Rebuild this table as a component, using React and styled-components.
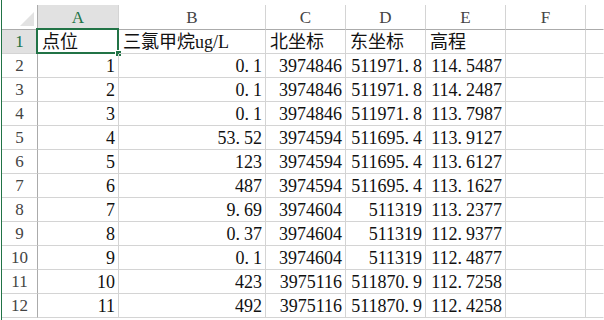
import React from 'react'
import styled, { createGlobalStyle } from 'styled-components'

const GlobalStyle = createGlobalStyle`
  html, body {
    margin: 0;
    padding: 0;
    background: #ffffff;
    overflow: hidden;
  }
`

const green = '#217346'
const grid = '#d4d4d4'
const headLine = '#ababab'

const Frame = styled.div`
  margin-left: 1px;
  border-left: 1px solid ${green};
  height: 320px;
  padding-top: 5px;
  box-sizing: border-box;
  font-family: "Liberation Serif", "Noto Sans CJK SC", serif;
  color: #111;
`

const Sheet = styled.div`
  display: grid;
  grid-template-columns: 36px 81px 147px 80px 80px 80px 80px 1fr;
  grid-template-rows: 25px;
  grid-auto-rows: 24px;
`

const Corner = styled.div`
  position: relative;
  box-sizing: border-box;
  border-right: 1px solid ${headLine};
  border-bottom: 1px solid ${headLine};

  &::after {
    content: '';
    position: absolute;
    right: 3px;
    bottom: 3px;
    width: 14px;
    height: 14px;
    background: #e2e2e2;
    clip-path: polygon(100% 0, 100% 100%, 0 100%);
  }
`

const ColHead = styled.div`
  box-sizing: border-box;
  display: flex;
  align-items: center;
  justify-content: center;
  font-size: 17px;
  padding-top: 1px;
  background: ${p => (p.$active ? '#e1e1e1' : '#ffffff')};
  color: ${p => (p.$active ? green : '#444')};
  border-right: 1px solid ${p => (p.$last ? 'transparent' : grid)};
  border-bottom: 1px solid ${headLine};
`

const RowHead = styled.div`
  box-sizing: border-box;
  display: flex;
  align-items: center;
  justify-content: center;
  font-size: 17px;
  padding-top: 1px;
  background: ${p => (p.$active ? '#e1e1e1' : '#ffffff')};
  color: ${p => (p.$active ? green : '#444')};
  border-right: 1px solid ${p => (p.$active ? green : headLine)};
  border-bottom: 1px solid ${grid};
`

const Cell = styled.div`
  position: relative;
  box-sizing: border-box;
  font-size: 18px;
  line-height: 23px;
  padding: 1px 3px 0 4px;
  white-space: nowrap;
  overflow: visible;
  text-align: ${p => (p.$num ? 'right' : 'left')};
  border-right: 1px solid ${p => (p.$last ? 'transparent' : grid)};
  border-bottom: 1px solid ${grid};
`

// SimSun-like half-width period: wider than the serif one
const Dot = styled.span`
  padding-right: 4px;
`

const Selected = styled(Cell)`
  &::before {
    content: '';
    position: absolute;
    top: -2px;
    left: -2px;
    right: -1px;
    bottom: -1px;
    border: 2px solid ${green};
    pointer-events: none;
  }

  &::after {
    content: '';
    position: absolute;
    right: -4px;
    bottom: -4px;
    width: 5px;
    height: 5px;
    background: ${green};
    border: 1px solid #ffffff;
  }
`

const columns = ['A', 'B', 'C', 'D', 'E', 'F', '']

const rows = [
  ['1', '0.1', '3974846', '511971.8', '114.5487'],
  ['2', '0.1', '3974846', '511971.8', '114.2487'],
  ['3', '0.1', '3974846', '511971.8', '113.7987'],
  ['4', '53.52', '3974594', '511695.4', '113.9127'],
  ['5', '123', '3974594', '511695.4', '113.6127'],
  ['6', '487', '3974594', '511695.4', '113.1627'],
  ['7', '9.69', '3974604', '511319', '113.2377'],
  ['8', '0.37', '3974604', '511319', '112.9377'],
  ['9', '0.1', '3974604', '511319', '112.4877'],
  ['10', '423', '3975116', '511870.9', '112.7258'],
  ['11', '492', '3975116', '511870.9', '112.4258'],
]

const Num = ({ value }) => {
  const [int, frac] = value.split('.')
  if (frac === undefined) return int
  return (
    <>
      {int}
      <Dot>.</Dot>
      {frac}
    </>
  )
}

const App = () => (
  <Frame>
    <GlobalStyle />
    <Sheet>
      <Corner />
      {columns.map((c, i) => (
        <ColHead key={i} $active={c === 'A'} $last={i === columns.length - 1}>
          {c}
        </ColHead>
      ))}

      <RowHead $active>1</RowHead>
      <Selected>点位</Selected>
      <Cell>三氯甲烷ug/L</Cell>
      <Cell>北坐标</Cell>
      <Cell>东坐标</Cell>
      <Cell>高程</Cell>
      <Cell />
      <Cell $last />

      {rows.map((r, i) => (
        <React.Fragment key={i}>
          <RowHead>{i + 2}</RowHead>
          {r.map((v, j) => (
            <Cell key={j} $num><Num value={v} /></Cell>
          ))}
          <Cell />
          <Cell $last />
        </React.Fragment>
      ))}
    </Sheet>
  </Frame>
)

export default App
